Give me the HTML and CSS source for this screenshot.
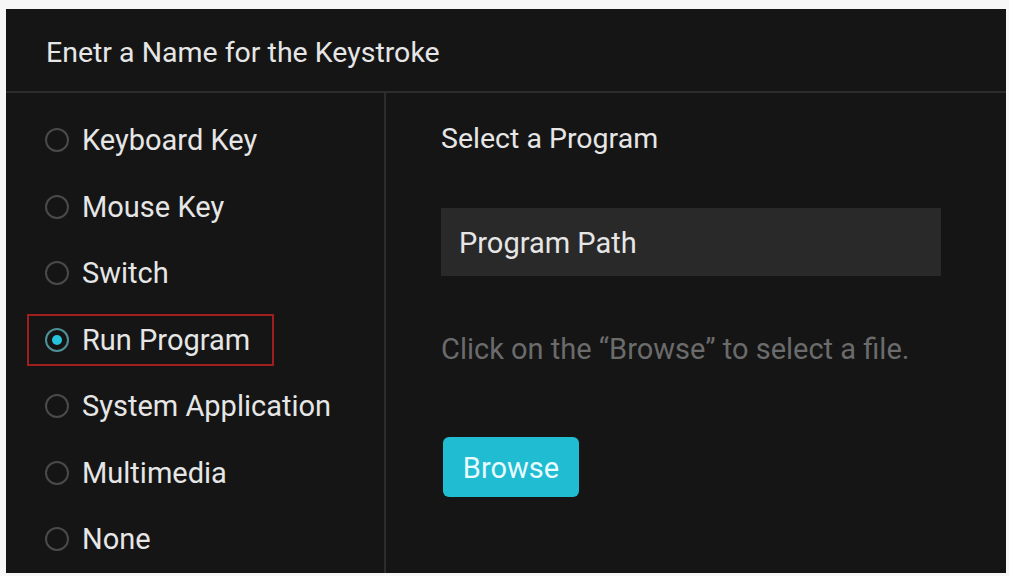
FILE: index.html
```html
<!DOCTYPE html>
<html lang="en">
<head>
<meta charset="utf-8">
<title>Keystroke</title>
<link rel="stylesheet" href="styles.css">
</head>
<body>
<div class="panel">
  <div class="header">Enetr a Name for the Keystroke</div>
  <div class="content">
    <div class="options">
      <div class="row"><span class="opt"><span class="radio"></span>Keyboard Key</span></div>
      <div class="row"><span class="opt"><span class="radio"></span>Mouse Key</span></div>
      <div class="row"><span class="opt"><span class="radio"></span>Switch</span></div>
      <div class="row"><span class="opt selected"><span class="radio on"></span>Run Program</span></div>
      <div class="row"><span class="opt"><span class="radio"></span>System Application</span></div>
      <div class="row"><span class="opt"><span class="radio"></span>Multimedia</span></div>
      <div class="row"><span class="opt"><span class="radio"></span>None</span></div>
    </div>
    <div class="detail">
      <div class="label">Select a Program</div>
      <div class="path">Program Path</div>
      <div class="hint">Click on the “Browse” to select a file.</div>
      <div class="browse">Browse</div>
    </div>
  </div>
</div>
</body>
</html>
```

FILE: styles.css
```css
html, body {
  margin: 0;
  padding: 0;
}
body {
  background: #f7f7f7;
  width: 1009px;
  height: 576px;
  padding: 9px 0 0 6px;
  box-sizing: border-box;
  font-family: Roboto, "Liberation Sans", sans-serif;
  overflow: hidden;
}
.panel {
  width: 1000px;
  height: 564px;
  background: #151515;
  display: flex;
  flex-direction: column;
  color: #e6e6e6;
  font-size: 29px;
}
.header {
  height: 84px;
  flex: none;
  box-sizing: border-box;
  border-bottom: 2px solid #2c2c2c;
  display: flex;
  align-items: center;
  padding: 4px 0 0 40px;
  font-size: 28.5px;
}
.content {
  flex: 1;
  display: flex;
}
.options {
  width: 378px;
  flex: none;
  border-right: 2px solid #2c2c2c;
  padding-top: 14px;
}
.row {
  height: 66.5px;
  display: flex;
  align-items: center;
  padding-left: 21px;
}
.opt {
  display: inline-flex;
  align-items: center;
  height: 52px;
  box-sizing: border-box;
  border: 2px solid transparent;
  padding: 0 22px 0 16px;
  gap: 13px;
}
.opt.selected {
  border-color: #a01e1e;
}
.radio {
  width: 24px;
  height: 24px;
  box-sizing: border-box;
  border: 2px solid #4a4a4a;
  border-radius: 50%;
  display: flex;
  align-items: center;
  justify-content: center;
}
.radio.on {
  border-color: #4f8f96;
}
.radio.on::after {
  content: "";
  width: 10px;
  height: 10px;
  border-radius: 50%;
  background: #25c3dc;
}
.detail {
  flex: 1;
  padding: 31px 0 0 55px;
  display: flex;
  flex-direction: column;
  align-items: flex-start;
}
.label {
  line-height: 30px;
  font-size: 28.5px;
}
.path {
  margin-top: 54px;
  width: 500px;
  height: 68px;
  background: #292929;
  display: flex;
  align-items: center;
  padding: 2px 0 0 18px;
  box-sizing: border-box;
}
.hint {
  margin-top: 58px;
  line-height: 30px;
  color: #6b6b6b;
}
.browse {
  margin-top: 73px;
  margin-left: 2px;
  width: 136px;
  height: 60px;
  border-radius: 6px;
  background: #1fbcd2;
  color: #e8fbff;
  display: flex;
  align-items: center;
  justify-content: center;
  padding-top: 2px;
  box-sizing: border-box;
}
```
